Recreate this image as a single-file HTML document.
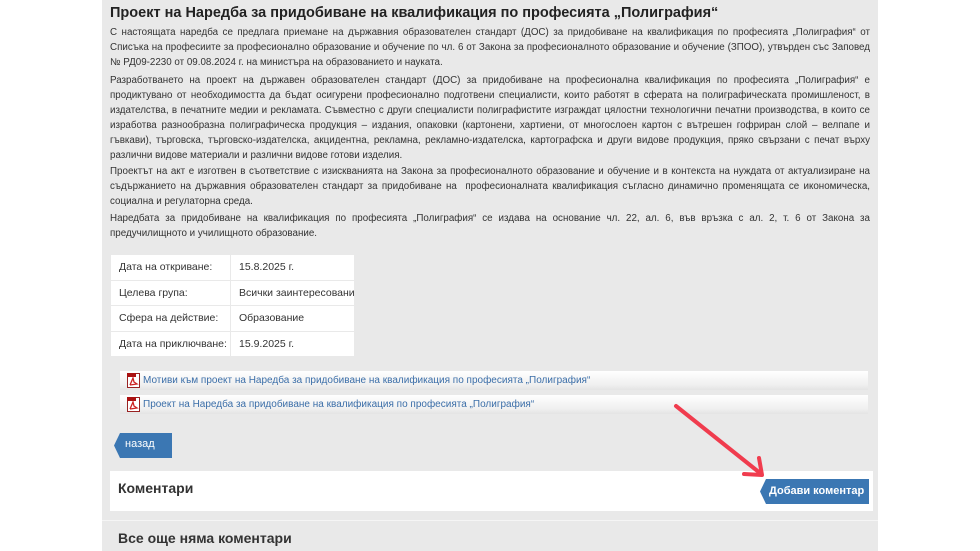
<!DOCTYPE html>
<html><head><meta charset="utf-8"><style>
*{margin:0;padding:0;box-sizing:border-box}
body{width:980px;height:551px;background:#fff;overflow:hidden;position:relative;font-family:"Liberation Sans",sans-serif;color:#333}
#panel{position:absolute;left:102px;top:0;width:776px;height:551px;background:#e9e9e9}
h1{position:absolute;left:110px;top:5px;font-size:14.5px;font-weight:bold;color:#222;white-space:nowrap}
.t{position:absolute;left:110px;width:760px;font-size:9.8px;line-height:15px;color:#333}
.l{display:block;text-align:justify;text-align-last:justify;white-space:nowrap;height:15px}
.l.e{text-align-last:left}
table{position:absolute;left:110px;top:254px;width:245px;table-layout:fixed;border-collapse:collapse;background:#fff;font-size:10.5px}
td{height:25.5px;padding-left:8px;border:1px solid #e9e9e9;white-space:nowrap;overflow:hidden}
td:first-child{width:120px}
.lk{position:absolute;left:120px;width:748px;height:19px;background:linear-gradient(#fff,#f0f0f0 70%,#e4e4e4);font-size:10px;color:#3b6ea8;line-height:19px;padding-left:23px;white-space:nowrap}
.pdf{position:absolute;left:7px;top:2px;width:13px;height:15px}
.btn{position:absolute;background:#3b77b3;color:#fff;font-weight:bold;font-size:11px;clip-path:polygon(6px 0,100% 0,100% 100%,6px 100%,0 50%)}
</style></head><body>
<div id="panel"></div>
<h1>Проект на Наредба за придобиване на квалификация по професията „Полиграфия“</h1>
<div class="t" style="top:24.5px">
<span class="l">С настоящата наредба се предлага приемане на държавния образователен стандарт (ДОС) за придобиване на квалификация по професията „Полиграфия“ от</span>
<span class="l">Списъка на професиите за професионално образование и обучение по чл. 6 от Закона за професионалното образование и обучение (ЗПОО), утвърден със Заповед</span>
<span class="l e">№ РД09-2230 от 09.08.2024 г. на министъра на образованието и науката.</span>
</div>
<div class="t" style="top:72.5px">
<span class="l">Разработването на проект на държавен образователен стандарт (ДОС) за придобиване на професионална квалификация по професията „Полиграфия“ е</span>
<span class="l">продиктувано от необходимостта да бъдат осигурени професионално подготвени специалисти, които работят в сферата на полиграфическата промишленост, в</span>
<span class="l">издателства, в печатните медии и рекламата. Съвместно с други специалисти полиграфистите изграждат цялостни технологични печатни производства, в които се</span>
<span class="l">изработва разнообразна полиграфическа продукция – издания, опаковки (картонени, хартиени, от многослоен картон с вътрешен гофриран слой – велпапе и</span>
<span class="l">гъвкави), търговска, търговско-издателска, акцидентна, рекламна, рекламно-издателска, картографска и други видове продукция, пряко свързани с печат върху</span>
<span class="l e">различни видове материали и различни видове готови изделия.</span>
</div>
<div class="t" style="top:163.5px">
<span class="l">Проектът на акт е изготвен в съответствие с изискванията на Закона за професионалното образование и обучение и в контекста на нуждата от актуализиране на</span>
<span class="l">съдържанието на държавния образователен стандарт за придобиване на &nbsp;професионалната квалификация съгласно динамично променящата се икономическа,</span>
<span class="l e">социална и регулаторна среда.</span>
</div>
<div class="t" style="top:210.5px">
<span class="l">Наредбата за придобиване на квалификация по професията „Полиграфия“ се издава на основание чл. 22, ал. 6, във връзка с ал. 2, т. 6 от Закона за</span>
<span class="l e">предучилищното и училищното образование.</span>
</div>
<table>
<tr><td>Дата на откриване:</td><td>15.8.2025 г.</td></tr>
<tr><td>Целева група:</td><td>Всички заинтересовани</td></tr>
<tr><td>Сфера на действие:</td><td>Образование</td></tr>
<tr><td>Дата на приключване:</td><td>15.9.2025 г.</td></tr>
</table>
<div class="lk" style="top:371px"><svg class="pdf" viewBox="0 0 13 15"><rect x="0.5" y="0.5" width="12" height="14" fill="#fff" stroke="#922"/><rect x="0" y="0" width="9" height="4" fill="#a11"/><path d="M3 12 L6 5 L7 9 L10 11 L3 12" fill="none" stroke="#c22" stroke-width="1.3"/></svg>Мотиви към проект на Наредба за придобиване на квалификация по професията „Полиграфия“</div>
<div class="lk" style="top:395px"><svg class="pdf" viewBox="0 0 13 15"><rect x="0.5" y="0.5" width="12" height="14" fill="#fff" stroke="#922"/><rect x="0" y="0" width="9" height="4" fill="#a11"/><path d="M3 12 L6 5 L7 9 L10 11 L3 12" fill="none" stroke="#c22" stroke-width="1.3"/></svg>Проект на Наредба за придобиване на квалификация по професията „Полиграфия“</div>
<div class="btn" style="left:114px;top:433px;width:58px;height:25px;line-height:22px;padding-left:11px;font-weight:normal">назад</div>
<div style="position:absolute;left:110px;top:471px;width:763px;height:40px;background:#fff"></div>
<div style="position:absolute;left:118px;top:480px;font-size:14px;font-weight:bold;color:#333">Коментари</div>
<div class="btn" style="left:760px;top:479px;width:109px;height:25px;line-height:24px;padding-left:9px;white-space:nowrap">Добави коментар</div>
<div style="position:absolute;left:102px;top:520px;width:776px;height:1px;background:#f5f5f5"></div>
<div style="position:absolute;left:118px;top:530px;font-size:14px;font-weight:bold;color:#333">Все още няма коментари</div>
<svg style="position:absolute;left:0;top:0" width="980" height="551"><g stroke="#f03c4e" stroke-width="4" stroke-linecap="round" stroke-linejoin="round" fill="none"><line x1="676" y1="406" x2="760" y2="473"/><polyline points="744,474 762,475 759,458"/></g></svg>
</body></html>
